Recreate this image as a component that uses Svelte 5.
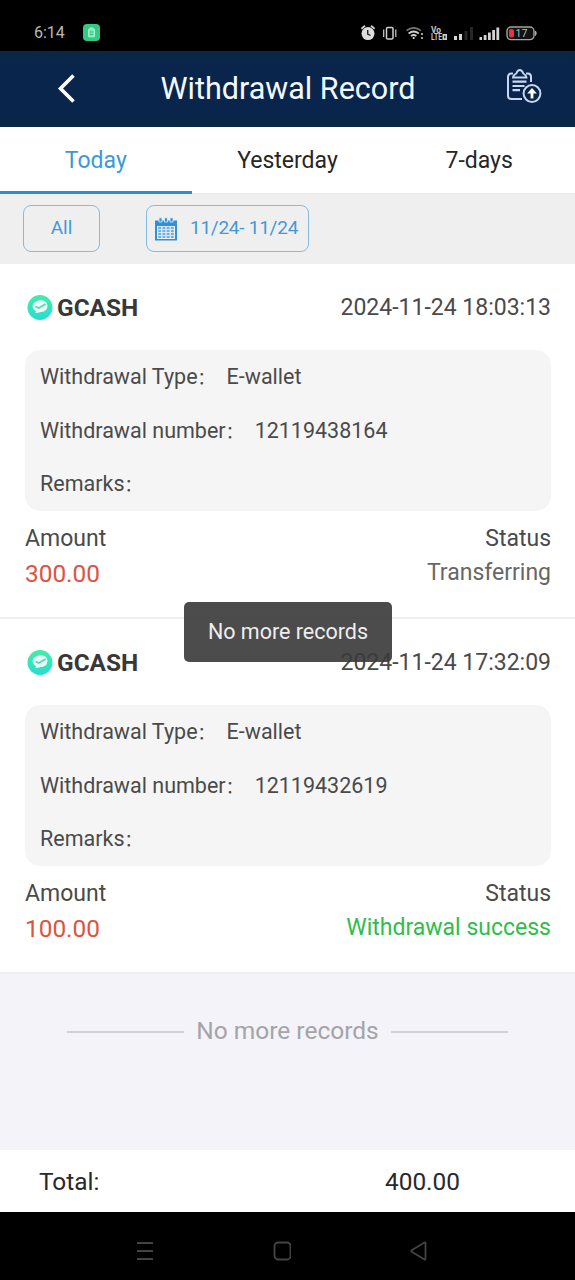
<script>
  const tabs = ['Today', 'Yesterday', '7-days'];
  const records = [
    { time: '2024-11-24 18:03:13', number: '12119438164', amount: '300.00', status: 'Transferring', done: false },
    { time: '2024-11-24 17:32:09', number: '12119432619', amount: '100.00', status: 'Withdrawal success', done: true }
  ];
  const cells = [0, 1, 2, 3];
</script>

<div class="screen">
  <div class="statusbar">
    <span class="clock">6:14</span>
    <svg class="app" width="17" height="17" viewBox="0 0 17 17">
      <rect width="17" height="17" rx="4" fill="#35c986" />
      <path d="M5.5 5.5h1.3V4h3.4v1.5h1.3v7.3h-6z" fill="#7be8b5" stroke="#9ff3cd" />
      <path d="M7 8h3M7 10.4h3" stroke="#35b97d" />
    </svg>
    <svg class="sys" width="178" height="20" viewBox="0 0 178 20">
      <g fill="none" stroke="#cfcfcf">
        <circle cx="8" cy="10.6" r="6.5" fill="#dedede" stroke="none" />
        <path d="M1.4 5.8 5 2.8M11 2.8l3.6 3" stroke-width="1.8" />
        <path d="M7.7 7v4l2.8 1.5" stroke="#222" stroke-width="1.4" />
        <rect x="26.5" y="4.5" width="6.5" height="11.5" rx="1.3" stroke-width="1.5" />
        <path d="M23.7 6.5v7.5M35.8 6.5v7.5" stroke-width="1.2" />
        <path d="M46.500 7.7q7.2-5.6 14.4 0" stroke-width="1.6" stroke="#777" />
        <path d="M48.600 10.5q5.1-4 10.2 0M51 13q2.7-2 5.4 0" stroke-width="1.8" />
        <circle cx="53.7" cy="15" r="1.1" fill="#ddd" stroke="none" />
        <path d="M62 10v2M62 14v2" stroke-width="2" stroke="#999" />
      </g>
      <g fill="#c8c8c8" font-family="Roboto, sans-serif" font-weight="700">
        <text x="71" y="9.5" font-size="9" textLength="10" lengthAdjust="spacingAndGlyphs">Vo</text>
        <text x="71" y="17" font-size="9" textLength="11" lengthAdjust="spacingAndGlyphs">LTE</text>
        <path d="M82.500 11h4.500v6h-4.500zM84.200 12.700v2.500h1.200v-2.500z" fill-rule="evenodd" />
      </g>
      <g fill="#d4d4d4">
        <path d="M94 13h3v4h-3zM99 11h3v6h-3z" />
        <path d="M104.5 8h3v9h-3zM110 4h3v13h-3z" fill="#262626" />
        <path d="M119.5 14h2.5v3h-2.5zM123.7 12h2.8v5h-2.8zM128 9.5h2.8V17H128zM132.2 7H135v10h-2.8zM136.4 4.5h2.8V17h-2.8z" />
      </g>
      <rect x="147" y="4" width="27" height="12.6" rx="4" fill="#111" stroke="#a4a4a4" stroke-width="1.4" />
      <path d="M175.5 8v4.5q1.6-2.2 0-4.5z" fill="#aaa" stroke="#aaa" />
      <rect x="149" y="6" width="5" height="8.6" rx="2" fill="#e83346" />
      <text x="155.6" y="14" font-size="10.5" fill="#b8b8b8" font-family="Roboto, sans-serif">17</text>
    </svg>
  </div>

  <header>
    <svg class="back" width="22" height="32" viewBox="0 0 22 32"><path d="M18.500 3.500 5.500 16.500 18.500 29.500" fill="none" stroke="#fff" stroke-width="3.6" /></svg>
    <h1>Withdrawal Record</h1>
    <svg class="export" width="38" height="38" viewBox="0 0 38 38" fill="none" stroke="#c7d7ef" stroke-width="2">
      <path d="M9 5.500H7.500Q4 5.500 4 9v18.500Q4 31 7.500 31H18M22 5.500h2Q27 5.500 27 9V14" />
      <path d="M9 9.500h13.500q-.3-2.500-3.200-4Q18 2 15.800 2t-3.500 3.500Q9.300 7 9 9.500z" stroke-width="1.900" />
      <path d="M8.500 13.700h14M8.500 18h12M8.500 22.200h7.500" stroke-width="2.200" />
      <circle cx="28" cy="25.500" r="8.400" fill="#0a2548" />
      <path d="M28 30.500v-8" stroke="#fff" stroke-width="2.800" /><path d="m23.200 25.500 4.800-5.500 4.800 5.500z" fill="#fff" stroke="none" />
    </svg>
  </header>

  <nav>
    {#each tabs as tab, i}
      <div class="tab" class:active={i === 0}>{tab}</div>
    {/each}
  </nav>

  <div class="filters">
    <div class="pill all">All</div>
    <div class="pill range">
      <svg width="22" height="24" viewBox="0 0 22 24" fill="#2f91da">
        <path d="M0 3.500h22v20H0zM2 9h18v13H2z" fill-rule="evenodd" />
        <path d="M4 .8h3v4.200h-3zM9.500 .8h3v4.200h-3zM15 .8h3v4.200h-3z" stroke="#eaf2f8" stroke-width=".8" />
        {#each cells as c}
          {#each cells as r}
            <rect x={3.200 + c * 4.200} y={9.800 + r * 3} width="3" height="2.200" fill="#6fb2e3" />
          {/each}
        {/each}
      </svg>
      <span>11/24- 11/24</span>
    </div>
  </div>

  <main>
    {#each records as record}
      <section class="record">
        <div class="top">
          <svg width="26" height="26" viewBox="0 0 26 26">
            <defs><linearGradient id="mint" x2="0" y2="1"><stop stop-color="#43edaa" /><stop offset="1" stop-color="#28dcd0" /></linearGradient></defs>
            <circle cx="13" cy="13.500" r="12.500" fill="url(#mint)" />
            <path d="M6 10q3.500-4 8.500-3.700Q20 6.500 20.500 12q-.5 5.800-7.500 6.300l-4.500 1 .4-2.200Q4.500 15 6 10z" fill="#edfff9" />
            <path d="m8.500 12.500 3.200 1.500 7-4" fill="none" stroke="#48dfb5" stroke-width="1.700" />
          </svg>
          <strong>GCASH</strong>
          <time>{record.time}</time>
        </div>
        <div class="details">
          <div>Withdrawal Type<b>：</b>E-wallet</div>
          <div>Withdrawal number<b>：</b>{record.number}</div>
          <div>Remarks<b>：</b></div>
        </div>
        <div class="labels"><span>Amount</span><span>Status</span></div>
        <div class="values">
          <span class="amount">{record.amount}</span>
          <span class="state" class:done={record.done}>{record.status}</span>
        </div>
      </section>
    {/each}
    <div class="end"><i></i><span>No more records</span><i></i></div>
  </main>

  <footer><span>Total:</span><span class="sum">400.00</span></footer>

  <div class="navbar">
    <svg width="18" height="20" viewBox="0 0 18 20"><path d="M1 2h16M1 10h16M1 18h16" /></svg>
    <svg width="18" height="20" viewBox="0 0 18 20"><rect x="1.500" y="1.500" width="16" height="17" rx="3.500" /></svg>
    <svg width="18" height="20" viewBox="0 0 18 20"><path d="M15.500 2v16q0 1-1 .4L1.700 10.700q-1-.7 0-1.400L14.500 1.600q1-.6 1 .4z" /></svg>
  </div>

  <div class="toast">No more records</div>
</div>

<style>
  :global(body) { margin: 0; background: #000; }
  .screen { position: relative; width: 575px; height: 1280px; display: flex; flex-direction: column; overflow: hidden; background: #f3f3f9; color: #4a4a4a; font-family: Roboto, "Noto Sans CJK SC", sans-serif; font-size: 23px; }
  .screen > * { box-sizing: border-box; flex-shrink: 0; }
  svg { display: block; flex: none; }
  .statusbar { height: 51px; display: flex; align-items: center; padding: 14px 37px 0 34px; background: #000; }
  .clock { width: 49px; color: #b9b9b9; font-size: 16px; line-height: 20px; }
  .sys { margin-left: auto; }
  header { height: 76px; display: flex; align-items: center; padding: 0 33px 0 55px; background: linear-gradient(#0a2744, #09254c 18%, #09254c 82%, #0a2744); color: #f4f9ff; }
  .back { margin-bottom: 2px; }
  h1 { flex: 1; margin: 0 5px 0 0; text-align: center; font-size: 30.5px; font-weight: 400; line-height: 40px; }
  .export { margin-bottom: 4px; }
  nav { height: 67px; display: flex; background: #fff; color: #262626; }
  .tab { flex: 1; box-sizing: border-box; border-bottom: 1px solid #e8e8e8; text-align: center; line-height: 67px; }
  .tab.active { color: #3c99d8; border-bottom: 3px solid #2b8cd6; }
  .filters { height: 70px; display: flex; align-items: flex-start; gap: 46px; padding: 11px 23px; background: #efefef; color: #4499d5; font-size: 19px; }
  .pill { box-sizing: border-box; height: 47px; border: 1.500px solid #83bcdf; border-radius: 8px; display: flex; align-items: center; justify-content: center; line-height: 43px; padding-bottom: 2px; }
  .all { width: 77px; }
  .range { width: 163px; justify-content: flex-start; padding-left: 8px; gap: 13px; }
  .range svg { margin-top: 2px; }
  .pill span { white-space: nowrap; letter-spacing: -.25px; }
  main { flex: 1; }
  .record { box-sizing: border-box; height: 355px; padding: 27px 24px 0 25px; background: #fff; border-bottom: 2px solid #eeeeef; }
  .top { height: 32px; display: flex; align-items: center; padding-left: 2px; }
  .top strong { margin-left: 4px; color: #383838; font-weight: 700; font-size: 24.400px; }
  .top time { margin-left: auto; }
  .details { box-sizing: border-box; height: 161px; margin-top: 27px; padding: 0 15px; border-radius: 15px; background: #f5f5f5; font-size: 21.500px; }
  .details div { height: 53.500px; line-height: 53px; white-space: pre; }
  .details b { display: inline-block; width: 29px; margin-left: 0; font-size: 17px; font-weight: 400; line-height: 20px; }
  .labels, .values { display: flex; justify-content: space-between; line-height: 34px; }
  .labels { margin-top: 11px; }
  .values { color: #666; }
  .amount { color: #dc5440; font-size: 24.400px; line-height: 35px; }
  .state.done { color: #2fbd4d; }
  .end { display: flex; align-items: center; justify-content: center; gap: 12px; margin-top: 40px; color: #a4a4a8; font-size: 24.500px; line-height: 34px; }
  .end i { width: 117px; height: 2px; margin-top: 2px; background: #d1d1d6; }
  footer { height: 62px; display: grid; grid-template-columns: 346px 1fr; align-items: center; padding: 1px 39px 0; background: #fff; color: #292929; font-size: 24.400px; }
  .navbar { height: 68px; display: flex; justify-content: center; gap: 119px; padding-top: 29px; padding-right: 12px; background: #000; }
  .navbar svg { fill: none; stroke: #444; stroke-width: 1.800; }
  .toast { position: absolute; left: 184px; top: 602px; width: 208px; height: 60px; border-radius: 5px; background: rgba(58, 58, 58, .91); color: #eee; font-size: 21.500px; line-height: 59px; text-align: center; }
</style>
